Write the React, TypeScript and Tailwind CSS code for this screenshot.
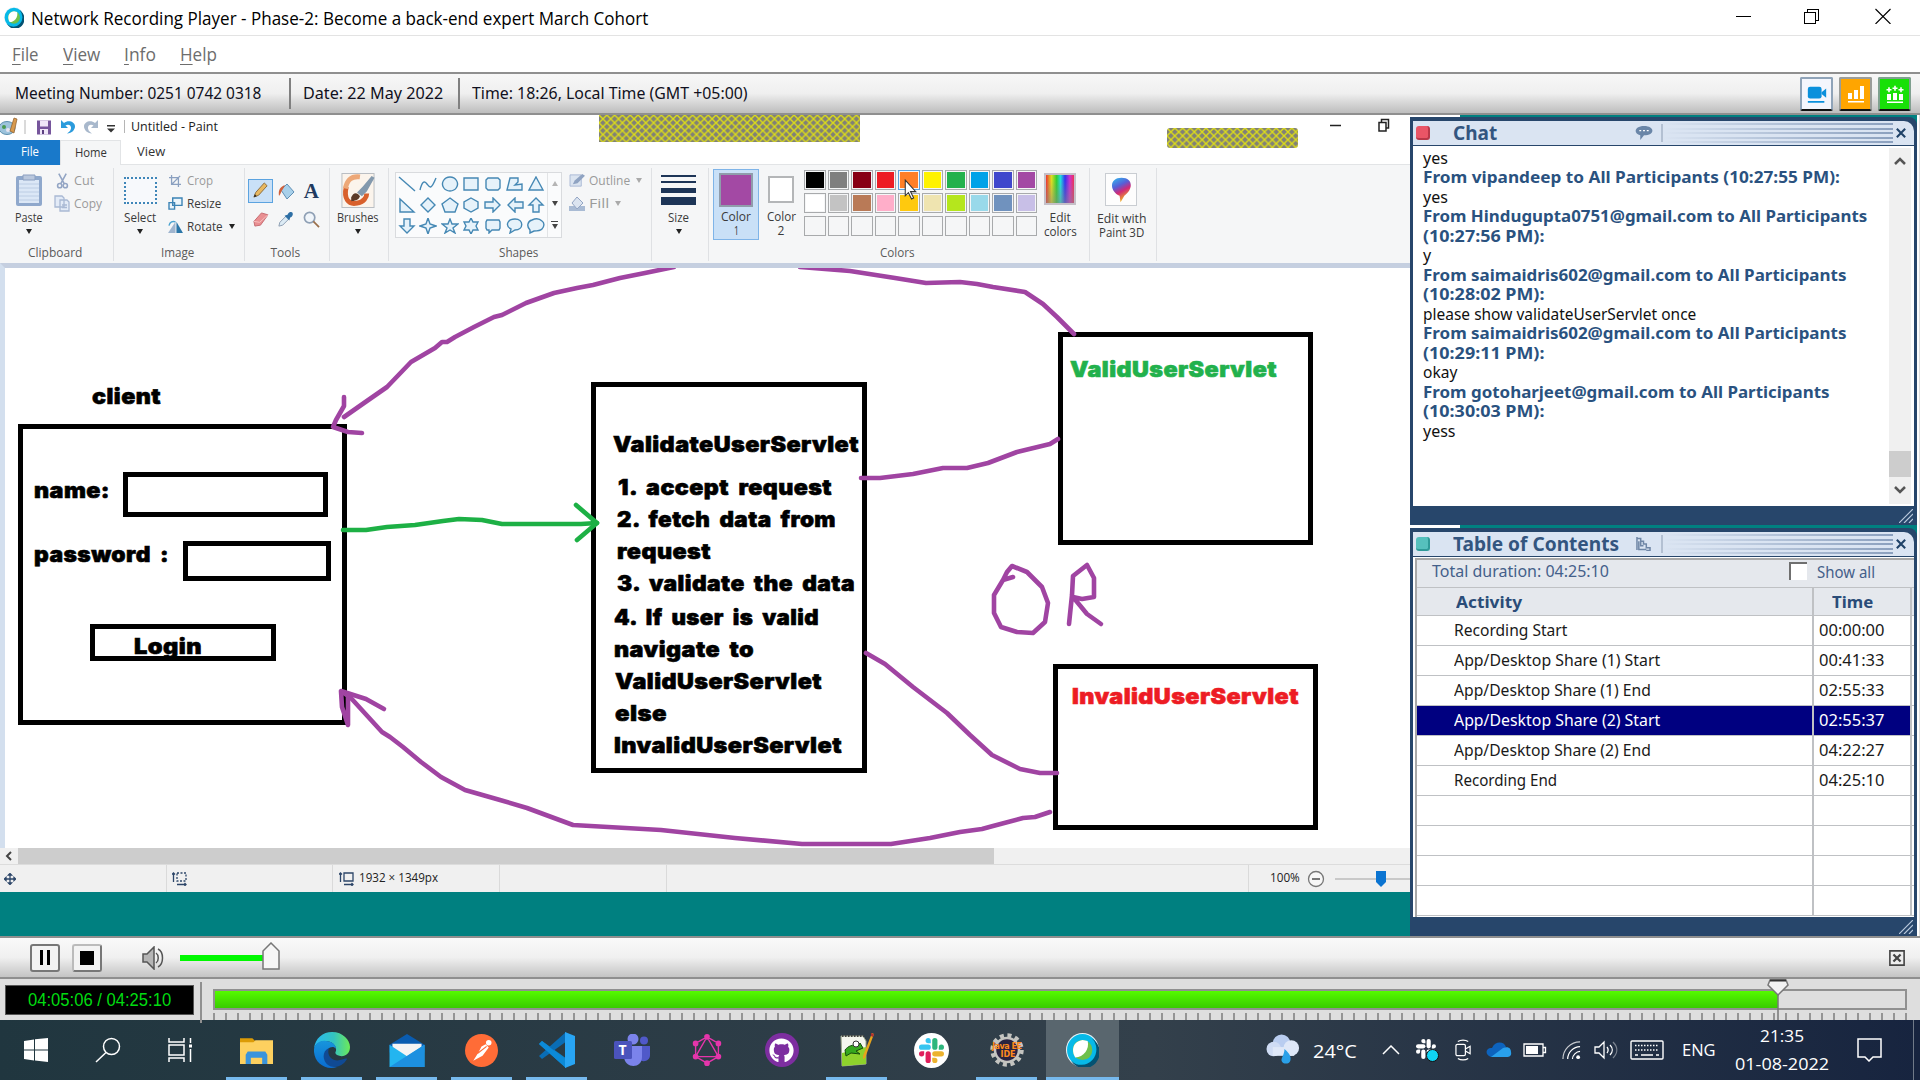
import React, { useLayoutEffect, useRef, useState } from "react";
import { FaGithub } from "react-icons/fa";
import { SiGraphql } from "react-icons/si";

/* One line of text, squeezed or stretched to a given width. */
function Fit({ w, className = "", children }: { w: number; className?: string; children: React.ReactNode }) {
  const ref = useRef<HTMLSpanElement>(null);
  const [scale, setScale] = useState(1);
  useLayoutEffect(() => {
    if (ref.current) setScale(w / ref.current.offsetWidth);
  }, [w]);
  return (
    <span className={"block shrink-0 whitespace-nowrap " + className} style={{ width: w }}>
      <span ref={ref} className="inline-block origin-left" style={{ transform: `scaleX(${scale})` }}>
        {children}
      </span>
    </span>
  );
}

const segoe = "font-['Open_Sans','Noto_Sans',sans-serif]";
const tahoma = "font-['Noto_Sans','DejaVu_Sans',sans-serif]";

function WebexLogo({ className }: { className: string }) {
  return (
    <svg viewBox="0 0 32 32" className={className} preserveAspectRatio="none">
      <circle cx="16" cy="16" r="16" fill="#e8f4f8" />
      <circle cx="16" cy="16" r="15" fill="#07b9e8" />
      <path d="M25 5 A15 15 0 1 1 5 26 A13 13 0 0 0 25 5Z" fill="#045272" />
      <circle cx="16" cy="16" r="9.5" fill="#6dc04b" />
      <path d="M21 7.5 C23 15 17 23 9 23 C5 17 6 8 16 6.5Z" fill="#fff" />
    </svg>
  );
}

function TitleBar() {
  return (
    <div className="flex h-[36px] items-center border-b border-[#e3e3e3] bg-white pl-1">
      <WebexLogo className="h-[21px] w-5" />
      <Fit w={617} className={"ml-[7px] text-[18px] leading-[34px] text-black " + segoe}>
        Network Recording Player - Phase-2: Become a back-end expert March Cohort
      </Fit>
      <svg className="-mt-[3px] mr-[29px] ml-auto h-[16px] w-[156px]" viewBox="0 0 156 16" fill="none" stroke="#000" strokeWidth="1.1" shapeRendering="crispEdges">
        <path d="M0.5 8.5H16M69.5 4.5h11v11h-11zM72.5 4V1.500h11v11h-3" />
        <path d="M140.500 1l15 15M155.500 1l-15 15" shapeRendering="auto" />
      </svg>
    </div>
  );
}

function MenuBar() {
  const items: [string, string, number, string][] = [
    ["F", "ile", 27, "ml-[12px]"],
    ["V", "iew", 37, "ml-[24px]"],
    ["I", "nfo", 32, "ml-[24px]"],
    ["H", "elp", 37, "ml-[24px]"],
  ];
  return (
    <div className={"flex h-[36px] items-center text-[18px] text-[#6d6d6d] " + segoe}>
      {items.map(([a, b, w, m]) => (
        <Fit key={b} w={w} className={m}>
          <span className="underline decoration-1 underline-offset-[3px]">{a}</span>
          {b}
        </Fit>
      ))}
    </div>
  );
}

function InfoBar() {
  return (
    <div className={"flex h-[43px] items-center border-y-2 border-[#8f8f8f] bg-linear-to-b from-[#f7f7f7] via-[#efefef] via-50% to-[#bdbdbd] text-[16.500px] text-[#101020] " + tahoma}>
      <Fit w={246} className="ml-[15px]">Meeting Number: 0251 0742 0318</Fit>
      <i className="ml-[28px] h-[31px] w-[2px] bg-[#808080]" />
      <Fit w={140} className="ml-[12px]">Date: 22 May 2022</Fit>
      <i className="ml-[15px] h-[31px] w-[2px] bg-[#808080]" />
      <Fit w={276} className="ml-[12px]">Time: 18:26, Local Time (GMT +05:00)</Fit>
      <div className="mr-[9px] ml-auto flex gap-[6px]">
        <div className="grid h-[34px] w-[33px] place-items-center rounded-[2px] border-2 border-[#8fa3b8] border-b-[#111] bg-[#f4f6fd]">
          <svg viewBox="0 0 24 20" className="h-[20px] w-[22px]" fill="#0a90dc">
            <rect x="2" y="2" width="15" height="13" rx="2.500" />
            <path d="M17 8l5-4v10l-5-4zM2 17.500h18v2H2z" />
          </svg>
        </div>
        <div className="grid h-[34px] w-[33px] place-items-center rounded-[2px] border-2 border-[#9a9d9a] border-b-[#111] bg-[#ffa500]">
          <svg viewBox="0 0 20 20" className="h-[20px] w-[20px]" fill="#fff">
            <path d="M2 9h4v6H2zM8 6h4v9H8zM14 2h4v13h-4zM2 17h16v1.500H2z" />
          </svg>
        </div>
        <div className="grid h-[34px] w-[33px] place-items-center rounded-[2px] border-2 border-[#7fa08f] border-b-[#111] bg-[#18e008]">
          <svg viewBox="0 0 20 20" className="h-[20px] w-[20px]" fill="#fff">
            <path d="M2 10h4v6H2zM8 9h4v7H8zM14 10h4v6h-4zM2 17.500h16V19H2zM1.500 5h5v1.600h-5zM3.200 3.300h1.600v5H3.200zM7.500 3.500h5v1.600h-5zM9.200 1.800h1.600v5H9.200zM13.500 5h5v1.600h-5zM15.200 3.300h1.600v5h-1.600z" />
          </svg>
        </div>
      </div>
    </div>
  );
}

/* ---------- Paint ---------- */

function Hatch({ id, className }: { id: string; className: string }) {
  return (
    <svg className={className}>
      <defs>
        <pattern id={id} width="7.800" height="7.800" patternUnits="userSpaceOnUse">
          <rect width="7.800" height="7.800" fill="#808078" />
          <path d="M0 0L7.800 7.800M7.800 0L0 7.800" stroke="#dcdc18" strokeWidth="1.400" />
        </pattern>
      </defs>
      <rect width="100%" height="100%" fill={`url(#${id})`} />
    </svg>
  );
}

function PaintTitle() {
  return (
    <div className={"flex h-[25px] shrink-0 bg-white text-[12.500px] text-[#222] " + segoe}>
      <svg className="mt-[2px] h-[20px] w-[120px]" viewBox="0 0 120 20">
        <ellipse cx="7" cy="11" rx="8" ry="6.500" fill="#9dc3dc" stroke="#5b8fae" />
        <circle cx="4" cy="10" r="2" fill="#4a9a50" />
        <circle cx="8" cy="13" r="2" fill="#e5e5f0" />
        <path d="M10 14L14 1l3 1-3 14z" fill="#d89a4e" stroke="#8a5a2a" strokeWidth=".7" />
        <path d="M25 3v14" stroke="#b5b5b5" />
        <path d="M37 3.500h14v14H37z" fill="#76559c" />
        <path d="M40 3.500h8v6h-8zM40 12h8v5.500h-8z" fill="#efe6f8" />
        <path d="M42 13h2v4h-2z" fill="#5b3f80" />
        <path d="M61 3v8h7l-2.500-2.500c3-2 6 0 5.500 3-.5 3-3 4-4 5 5 0 8-4 8-7 0-5-7-7-11-3.500z" fill="#2b9bdc" />
        <path d="M98 3v8h-7l2.500-2.500c-3-2-6 0-5.500 3 .5 3 3 4 4 5-5 0-8-4-8-7 0-5 7-7 11-3.500z" fill="#a8b8cc" />
        <path d="M107 8h8v1.500h-8zM107 11.500h8l-4 4z" fill="#333" />
      </svg>
      <i className="mt-[5px] ml-[4px] h-[13px] w-px bg-[#b5b5b5]" />
      <Fit w={87} className="ml-[6px] leading-[24px]">Untitled - Paint</Fit>
      <Hatch id="hatchWide" className="z-10 ml-[381px] h-[27px] w-[261px] shrink-0" />
      <Hatch id="hatchSmall" className="z-10 mt-[13px] ml-[307px] h-[20px] w-[131px] shrink-0 rounded-[3px]" />
      <svg className="mt-[2px] ml-[31px] h-[16px] w-[64px]" viewBox="0 0 64 16" fill="none" stroke="#222" strokeWidth="1.500">
        <path d="M1 8.500h11M50 5.500h7v8.500h-7zM52.500 5V2.500h7V11h-2.500" />
      </svg>
    </div>
  );
}

function PaintTabs() {
  return (
    <div className={"flex h-[25px] shrink-0 border-b border-[#e2e4e6] bg-white text-[12px] leading-[24px] text-[#333] " + segoe}>
      <div className="flex h-[25px] w-[60px] justify-center bg-[#1979ca] text-white">
        <Fit w={18}>File</Fit>
      </div>
      <div className="flex h-[25px] w-[61px] justify-center border-x border-t border-[#e2e4e6] bg-[#f5f6f7]">
        <Fit w={32}>Home</Fit>
      </div>
      <Fit w={28} className="ml-[16px]">View</Fit>
    </div>
  );
}

function Caret({ className = "border-t-[#222]" }: { className?: string }) {
  return <i className={"block h-0 w-0 border-x-[3px] border-t-[5px] border-x-transparent " + className} />;
}

function Big({ icon, label, w, className = "" }: { icon: React.ReactNode; label: string; w: number; className?: string }) {
  return (
    <div className={"flex flex-col items-center pt-[4px] " + className}>
      <div className="flex h-[38px] items-center">{icon}</div>
      <Fit w={w} className="leading-[18px]">{label}</Fit>
      <Caret className="mt-[2px] border-t-[#222]" />
    </div>
  );
}

function Row({ icon, label, w, caret = false, dim = false }: { icon: React.ReactNode; label: string; w: number; caret?: boolean; dim?: boolean }) {
  return (
    <div className={"flex h-[23px] items-center " + (dim ? "text-[#9a9a9a]" : "")}>
      <span className="mr-[3px] flex w-[18px] justify-center">{icon}</span>
      <Fit w={w}>{label}</Fit>
      {caret && <Caret className={"ml-[6px] " + (dim ? "border-t-[#aaaaaa]" : "border-t-[#222]")} />}
    </div>
  );
}

function Group({ label, lw, className, children }: { label: string; lw: number; className: string; children: React.ReactNode }) {
  return (
    <div className={"flex shrink-0 flex-col border-r border-[#dfe1e4] " + className}>
      <div className="flex h-[76px] shrink-0">{children}</div>
      <div className="flex justify-center pr-[3px] text-[#5a5a5a]">
        <Fit w={lw} className="leading-[18px]">{label}</Fit>
      </div>
    </div>
  );
}

const shapePaths = [
  "M1 1L17 15",
  "M1 14C3 6 5 4 8 8S12 14 17 2",
  "M9 1a7.500 7 0 1 0 .01 0z",
  "M2 2h14v12H2z",
  "M4 2h10l2 2v8l-2 2H4l-2-2V4z",
  "M4 2h8v4l-3 3 7-1v6H1z",
  "M9 1l7 13H2z",
  "M2 2l14 13H2z",
  "M9 1l7 7-7 7-7-7z",
  "M9 1l8 6-3 8H4L1 7z",
  "M9 1l7 4v6l-7 4-7-4V5z",
  "M1 5h8V1l7 7-7 7v-4H1z",
  "M17 5H9V1L2 8l7 7v-4h8z",
  "M6 15V8H2l7-7 7 7h-4v7z",
  "M6 1v7H2l7 7 7-7h-4V1z",
  "M9 0l2 6 6 2-6 2-2 6-2-6-6-2 6-2z",
  "M9 1l2 5h6l-5 4 2 5-5-3-5 3 2-5-5-4h6z",
  "M9 0l2 4h5l-2 4 2 4h-5l-2 4-2-4H2l2-4-2-4h5z",
  "M3 2h12l1 2v6l-1 2H8l-3 3v-3H3l-1-2V4z",
  "M9 1c9 0 9 11 0 11l-5 3 1-4C-1 8 1 1 9 1z",
  "M5 2c4-2 8-1 10 1 3 2 2 6 0 8-2 2-6 2-8 2l-4 2v-3C-1 8 1 3 5 2z",
];

const palette = [
  ["bg-[#000000]", "bg-[#7f7f7f]", "bg-[#880015]", "bg-[#ed1c24]", "bg-[#ff7f27]", "bg-[#fff200]", "bg-[#22b14c]", "bg-[#00a2e8]", "bg-[#3f48cc]", "bg-[#a349a4]"],
  ["bg-[#ffffff]", "bg-[#c3c3c3]", "bg-[#b97a57]", "bg-[#ffaec9]", "bg-[#ffc90e]", "bg-[#efe4b0]", "bg-[#b5e61d]", "bg-[#99d9ea]", "bg-[#7092be]", "bg-[#c8bfe7]"],
  Array(10).fill("bg-[#f5f6f7]") as string[],
];

function Ribbon() {
  return (
    <div className={"relative flex h-[98px] shrink-0 bg-[#f5f6f7] pt-[3px] pb-[2px] text-[12px] text-[#3a3a3a] " + segoe}>
      <Group label="Clipboard" lw={54} className="w-[114px]">
        <Big
          className="-mt-[1px] w-[57px]"
          label="Paste"
          w={28}
          icon={
            <svg viewBox="0 0 28 34" className="h-[34px] w-[28px]">
              <rect x="1" y="3" width="26" height="30" rx="2" fill="#8fa8cc" />
              <path d="M4 7h20v23H4z" fill="#dbe7f6" />
              <path d="M4 11h20M4 15h20M4 19h20M4 23h20M4 27h20" stroke="#bccde4" />
              <path d="M8 2h12v5H8z" fill="#b9c7dd" stroke="#8b9fc0" />
            </svg>
          }
        />
        <div className="-ml-[4px] flex flex-col pt-[1px]">
          <Row dim label="Cut" w={20} icon={
            <svg viewBox="0 0 14 18" className="h-[18px] w-[13px]" fill="none" stroke="#93a5c4" strokeWidth="1.700"><path d="M3 1l6 11M11 1L5 12" /><circle cx="4" cy="14" r="2.300" /><circle cx="10" cy="14" r="2.300" /></svg>
          } />
          <Row dim label="Copy" w={28} icon={
            <svg viewBox="0 0 16 17" className="h-[17px] w-[16px]" fill="#e3ebf7" stroke="#a9b9d4" strokeWidth="1.300"><path d="M1 1h7l2 2v9H1zM6 5h7l2 2v9H6z" /><path d="M8 10h5M8 12.500h5" /></svg>
          } />
        </div>
      </Group>
      <Group label="Image" lw={33} className="w-[131px]">
        <Big className="-mt-[1px] ml-[4px] w-[44px]" label="Select" w={32} icon={<div className="h-[27px] w-[33px] border-2 border-dotted border-[#3f86b8] bg-[#f7f9fc]" />} />
        <div className="ml-[4px] flex flex-col pt-[1px]">
          <Row dim label="Crop" w={26} icon={
            <svg viewBox="0 0 14 14" className="h-[12px] w-[12px]" fill="none" stroke="#8aa0c0" strokeWidth="1.500"><path d="M3 0v11h11M0 3h11v11M3 11L13 1" /></svg>
          } />
          <Row label="Resize" w={34} icon={
            <svg viewBox="0 0 16 14" className="h-[13px] w-[15px]" fill="#eaf4fb" stroke="#3b83b5" strokeWidth="1.500"><path d="M5 1h10v8H5zM1 6h6v7H1z" /></svg>
          } />
          <Row label="Rotate" w={36} caret icon={
            <svg viewBox="0 0 18 15" className="h-[14px] w-[17px]"><path d="M9 2l0 12H1z" fill="#9fb5cf" /><path d="M10 2l7 12h-7z" fill="#2b76a8" /><path d="M2 6C3 2 6 1 9 2" fill="none" stroke="#4ba3d0" strokeWidth="1.500" /></svg>
          } />
        </div>
      </Group>
      <Group label="Tools" lw={30} className="w-[85px]">
        <div className="mt-[10px] ml-[3px] grid h-[54px] w-[76px] grid-cols-3 grid-rows-2 place-items-center gap-y-[4px]">
          <div className="grid h-[24px] w-[25px] place-items-center border border-[#5ba3e0] bg-[#c9e0f7]">
            <svg viewBox="0 0 18 18" className="size-[17px]"><path d="M2 16l2-5L13 1l3 3L7 14z" fill="#e8b860" stroke="#8a6a3c" /><path d="M2 16l1-3 2 2z" fill="#222" /></svg>
          </div>
          <svg viewBox="0 0 18 18" className="size-[18px]"><path d="M4 8l6-6 7 8-7 7z" fill="#a8d0ea" stroke="#5f8fb5" /><path d="M8 3C3 5 1 8 2 14c2-2 2-5 4-7z" fill="#d0603c" /></svg>
          <b className="font-['Liberation_Serif',serif] text-[21px] leading-[20px] text-[#1f3a60]">A</b>
          <svg viewBox="0 0 18 16" className="h-[15px] w-[17px]"><path d="M2 10l8-9 7 2-8 11-6 1z" fill="#e98f92" stroke="#c46a70" /><path d="M2 10l6 1 9-8" fill="none" stroke="#f6c0c0" /></svg>
          <svg viewBox="0 0 18 18" className="size-[17px]"><path d="M2 16l1-4 7-7 3 3-7 7z" fill="#dcebf5" stroke="#8a9bb0" /><path d="M8 5l5 5 1-3c4-2 3-6 1-6-3 0-3 2-4 3z" fill="#2e6fa5" /></svg>
          <svg viewBox="0 0 18 18" className="size-[17px]" fill="#f0f5fa" stroke="#8fa0b5" strokeWidth="1.800"><circle cx="7" cy="7" r="5.500" /><path d="M11 11l6 6" stroke="#9a6f4a" /></svg>
        </div>
      </Group>
      <div className="flex w-[59px] shrink-0 justify-center border-r border-[#dfe1e4] pr-[2px]">
        <Big className="-mt-[1px]" label="Brushes" w={42} icon={
          <svg viewBox="0 0 34 36" className="h-[35px] w-[34px]">
            <rect x=".5" y=".5" width="33" height="35" fill="#fbf4ec" stroke="#b9bdc2" />
            <path d="M5 14C2 26 7 33 16 31c7-1 10-6 10-10" fill="none" stroke="#d8602c" strokeWidth="5" />
            <path d="M4 16C6 6 11 3 19 4" fill="none" stroke="#eda878" strokeWidth="5" />
            <path d="M16 20l6-6 9-11 3 2-8 14-5 5z" fill="#8399ad" />
            <path d="M10 25c2-5 6-6 9-1-1 4-6 5-9 5z" fill="#5b3a28" />
          </svg>
        } />
      </div>
      <Group label="Shapes" lw={39} className="w-[263px]">
        <div className="mt-[4px] ml-[6px] flex h-[66px] w-[167px] border border-[#d9dbde] bg-[#fafbfc]">
          <div className="grid w-[151px] grid-cols-7 grid-rows-3 place-items-center">
            {shapePaths.map((d, i) => (
              <svg key={i} viewBox="0 0 18 16" className="h-[16px] w-[18px]" fill={i < 2 ? "none" : "#e6f2fa"} stroke="#4588b4" strokeWidth="1.400"><path d={d} /></svg>
            ))}
          </div>
          <div className="flex w-[14px] flex-col items-center justify-around border-l border-[#e2e4e6]">
            <Caret className="rotate-180 border-t-[#b5b5b5]" />
            <Caret className="border-t-[#444]" />
            <div className="flex flex-col items-center gap-[2px]"><i className="h-px w-[7px] bg-[#444]" /><Caret className="border-t-[#444]" /></div>
          </div>
        </div>
        <div className="ml-[6px] flex flex-col pt-[1px]">
          <Row dim caret label="Outline" w={41} icon={
            <svg viewBox="0 0 18 16" className="h-[15px] w-[17px]"><path d="M1 2h12v12H1z" fill="#dbe4f0" stroke="#a9b9d4" /><path d="M4 12l2-4 8-7 3 2-8 8z" fill="#8fa3c2" /></svg>
          } />
          <Row dim caret label="Fill" w={20} icon={
            <svg viewBox="0 0 18 16" className="h-[16px] w-[18px]"><path d="M1 10h16v5H1z" fill="#a9bbd4" /><path d="M4 7l5-6 6 6-6 6z" fill="#dbe4f0" stroke="#93a5c4" /></svg>
          } />
        </div>
      </Group>
      <div className="flex w-[57px] shrink-0 justify-center border-r border-[#dfe1e4] pr-[3px]">
        <Big className="-mt-[1px]" label="Size" w={21} icon={
          <div className="flex h-[30px] w-[35px] flex-col justify-between *:bg-[#1d3557]"><i className="h-[1.500px]" /><i className="h-[2.500px]" /><i className="h-[5px]" /><i className="h-[8px]" /></div>
        } />
      </div>
      <Group label="Colors" lw={35} className="w-[381px]">
        <div className="mt-[1px] ml-[4px] flex h-[71px] w-[46px] flex-col items-center border border-[#7fb4e8] bg-[#c9e0f7] leading-[14px]">
          <div className="mt-[3px] mb-[3px] h-[34px] w-[34px] shrink-0 border-[2px] border-[#8f9cab] bg-[#a349a4]" />
          <Fit w={30}>Color</Fit>
          <Fit w={5}>1</Fit>
        </div>
        <div className="mt-[8px] ml-[6px] flex w-[32px] flex-col items-center leading-[14px]">
          <div className="mb-[7px] h-[27px] w-[26px] shrink-0 border-2 border-[#b4b6b8] bg-white" />
          <Fit w={29}>Color</Fit>
          <Fit w={7}>2</Fit>
        </div>
        <div className="mt-[2px] ml-[7px] flex flex-col gap-y-[3px]">
          {palette.map((row, r) => (
            <div key={r} className="flex gap-x-[2px]">
              {row.map((c, i) => (
                <div key={i} className={"h-[20px] w-[21.500px] border p-px " + (r === 0 && i === 4 ? "border-[#5ba3e0]" : "border-[#a8aaac]")}>
                  <div className={"h-full w-full " + c} />
                </div>
              ))}
            </div>
          ))}
        </div>
        <div className="mt-[5px] ml-[6px] flex w-[34px] flex-col items-center leading-[14px]">
          <div className="mb-[6px] h-[32px] w-[32px] shrink-0 border-2 border-[#c5c0c8] bg-[linear-gradient(to_bottom,transparent_20%,#8888_100%),linear-gradient(to_right,#e33,#dd2_20%,#3c3_38%,#2dd_52%,#33e_68%,#c3c_85%,#e35)]" />
          <Fit w={21}>Edit</Fit>
          <Fit w={33}>colors</Fit>
        </div>
      </Group>
      <div className="flex w-[67px] shrink-0 flex-col items-center border-r border-[#dfe1e4] pt-[5px] pr-[4px] leading-[14px]">
        <div className="mb-[6px] grid h-[33px] w-[32px] shrink-0 place-items-center border border-[#c9cdd2] bg-[#fdfdfd]">
          <svg viewBox="0 0 20 26" className="h-[26px] w-[19px]">
            <defs>
              <linearGradient id="balloon" x1="0" y1="0" x2=".4" y2="1">
                <stop offset="0" stopColor="#2fc0f0" />
                <stop offset=".4" stopColor="#5560d8" />
                <stop offset=".65" stopColor="#d02878" />
                <stop offset="1" stopColor="#f0b020" />
              </linearGradient>
            </defs>
            <path d="M10 0c13 0 12 13 3 19l-4 7-1-7C-3 14-3 0 10 0z" fill="url(#balloon)" />
          </svg>
        </div>
        <Fit w={49}>Edit with</Fit>
        <Fit w={45}>Paint 3D</Fit>
      </div>
      <svg viewBox="0 0 12 20" className="absolute top-[14px] left-[904px] h-[21px] w-[13px]">
        <path d="M1 1v15l3-3 3 6 2-1-3-6h5z" fill="#fff" stroke="#333" />
      </svg>
    </div>
  );
}

type Box = [number, number, number, number];
const boxes: Box[] = [
  [18, 424, 347, 725],
  [123, 472, 328, 517],
  [183, 541, 331, 581],
  [90, 624, 276, 661],
  [591, 382, 867, 773],
  [1058, 332, 1313, 545],
  [1053, 664, 1318, 830],
];
const labels: [string, number, number, number, string][] = [
  ["client", 92, 161, 404, "#000"],
  ["name:", 34, 110, 498, "#000"],
  ["password :", 34, 169, 562, "#000"],
  ["Login", 134, 202, 654, "#000"],
  ["ValidateUserServlet", 613, 859, 452, "#000"],
  ["1. accept request", 618, 832, 495, "#000"],
  ["2. fetch data from", 617, 836, 527, "#000"],
  ["request", 617, 711, 559, "#000"],
  ["3. validate the data", 617, 855, 591, "#000"],
  ["4. If user is valid", 614, 819, 625, "#000"],
  ["navigate to", 614, 754, 657, "#000"],
  ["ValidUserServlet", 615, 822, 689, "#000"],
  ["else", 615, 667, 721, "#000"],
  ["InvalidUserServlet", 614, 842, 753, "#000"],
  ["ValidUserServlet", 1070, 1277, 377, "#22b14c"],
  ["InvalidUserServlet", 1072, 1299, 704, "#ed1c24"],
];
const strokes = [
  "344,417 364,403 387,387 411,362 435,348 442,342 447,342 455,337 474,327 494,317 502,315 526,303 554,293 577,288 593,285 620,278 645,273 674,267",
  "800,267 850,271 895,278 926,283 960,282 977,284 993,287 1025,292 1043,304 1057,317 1074,334",
  "344,397 344,406 336,420 333,427 348,432 362,433",
  "861,478 880,478 913,474 943,468 967,468 988,463 1017,452 1050,444 1058,439",
  "866,653 885,664 913,687 947,713 970,735 992,755 1020,769 1040,773 1057,773",
  "384,709 366,699 341,691 342,707 348,725 348,696",
  "344,693 350,697 382,732 390,737 403,747 421,762 441,777 465,790 500,800 527,808 573,825 661,830 735,838 802,844 891,844 930,838 960,832 982,829 993,826 1023,818 1035,817 1050,812",
  "1013,577 1003,580 994,595 994,613 1001,627 1017,632 1033,633 1045,622 1048,603 1042,587 1027,572 1012,566 1007,572 1003,580",
  "1069,624 1072,595 1073,576 1087,565 1094,578 1094,597 1082,599 1073,597 1087,614 1101,624",
];
const greenStrokes = ["343,530 366,530 387,527 415,525 443,521 459,519 482,520 502,524 581,524 597,523", "576,505 597,523 577,540"];

function Canvas() {
  return (
    <div className="h-[585px] shrink-0 border-t-[5px] border-l-[5px] border-t-[#c5cfe0] border-l-[#d3dfee] bg-white">
      <svg className="block h-[580px] w-[1405px]" viewBox="5 268 1405 580">
        {labels.map(([t, x1, x2, y, c], i) => (
          <text key={i} x={x1} y={y} textLength={x2 - x1} lengthAdjust="spacingAndGlyphs" fill={c} stroke={c} strokeWidth=".6" className="font-['Inter',sans-serif] text-[21.500px] font-black tracking-[0.4px] [word-spacing:4px]">
            {t}
          </text>
        ))}
        {boxes.map(([x1, y1, x2, y2], i) => (
          <rect key={i} x={x1 + 2.5} y={y1 + 2.5} width={x2 - x1 - 5} height={y2 - y1 - 5} fill="none" stroke="#000" strokeWidth="5" />
        ))}
        <g fill="none" strokeWidth="4.600" strokeLinecap="round" strokeLinejoin="round">
          {strokes.map((p, i) => <polyline key={i} points={p} stroke="#a044a2" />)}
          {greenStrokes.map((p, i) => <polyline key={i} points={p} stroke="#1db045" />)}
        </g>
      </svg>
    </div>
  );
}

function PaintFooter() {
  return (
    <>
      <div className="flex h-[17px] shrink-0 items-center border-b border-[#dcdcdc] bg-[#f0f0f0]">
        <svg viewBox="0 0 18 16" className="h-[16px] w-[18px]" fill="none" stroke="#444" strokeWidth="2"><path d="M11 4L7 8l4 4" /></svg>
        <div className="h-[16px] w-[976px] bg-[#cdcdcd]" />
      </div>
      <div className={"flex h-[27px] shrink-0 items-center bg-[#f0f0f0] text-[12.500px] text-[#222] " + segoe}>
        <div className="flex h-full w-[167px] items-center border-r border-[#dadada] pl-[4px]">
          <svg viewBox="0 0 12 12" className="size-[12px]" stroke="#2c4568" strokeWidth="1.300" fill="#2c4568"><path d="M6 0v12M0 6h12M4.500 2L6 .5 7.500 2zM4.500 10L6 11.500 7.500 10zM2 4.500L.5 6 2 7.500zM10 4.500L11.500 6 10 7.500z" /></svg>
        </div>
        <div className="flex h-full w-[166px] items-center border-r border-[#dadada] pl-[5px]">
          <svg viewBox="0 0 15 14" className="h-[14px] w-[15px]" fill="none" stroke="#2c4568" strokeWidth="1.300"><path d="M5 1h9v8H5z" strokeDasharray="2 1.500" /><path d="M1.500 10V1M0 2.500L1.500 1 3 2.500M5 12.500h9M12.500 11L14 12.500 12.500 14" /></svg>
        </div>
        <div className="flex h-full w-[167px] items-center border-r border-[#dadada] pl-[6px]">
          <svg viewBox="0 0 15 14" className="h-[14px] w-[15px]" fill="none" stroke="#2c4568" strokeWidth="1.300"><path d="M5 1h9v8H5zM1.500 10V1M0 2.500L1.500 1 3 2.500M5 12.500h9M12.500 11L14 12.500 12.500 14" /></svg>
          <Fit w={79} className="ml-[5px]">1932 × 1349px</Fit>
        </div>
        <div className="h-full w-[167px] border-r border-[#dadada]" />
        <div className="h-full w-[582px] border-r border-[#dadada]" />
        <Fit w={30} className="ml-[21px]">100%</Fit>
        <svg viewBox="0 0 18 18" className="ml-[7px] size-[18px] shrink-0" fill="#f7f7f7" stroke="#777" strokeWidth="1.300"><circle cx="9" cy="9" r="7.500" /><path d="M5 9h8" strokeWidth="2" /></svg>
        <div className="ml-[10px] flex flex-1 items-center">
          <div className="h-[2px] w-[41px] bg-[#c9c9c9]" />
          <svg viewBox="0 0 10 16" className="h-[16px] w-[10px]" fill="#0b74d1"><path d="M0 0h10v11l-5 5-5-5z" /></svg>
          <div className="h-[2px] flex-1 bg-[#c9c9c9]" />
        </div>
      </div>
    </>
  );
}

/* ---------- Side panels ---------- */

function PanelTitle({ title, w, color, iconGap, icon }: { title: string; w: number; color: string; iconGap: string; icon: React.ReactNode }) {
  return (
    <div className="mx-[3px] mt-[4px] flex h-[24px] shrink-0 items-center rounded-tr-[10px] bg-[#dae4f2]">
      <i className={"ml-[3px] h-[14px] w-[14px] rounded-[3px] border-r-2 border-b-2 " + color} />
      <Fit w={w} className="ml-[23px] text-[19px] leading-[22px] font-bold text-[#33557f]">{title}</Fit>
      <div className={"flex w-[20px] shrink-0 justify-center " + iconGap}>{icon}</div>
      <i className="ml-auto h-[18px] w-[2px] bg-[#b3c0d2]" />
      <div className="flex h-[20px] w-[230px] flex-col justify-between *:h-[2px] *:bg-linear-to-r *:from-transparent *:to-[#8ba0be]">
        <i /><i /><i /><i /><i />
      </div>
      <svg viewBox="0 0 12 12" className="mr-[8px] ml-[3px] h-[10px] w-[10px]" stroke="#1f4268" strokeWidth="2.500"><path d="M1 1l10 10M11 1L1 11" /></svg>
    </div>
  );
}

function Grip() {
  return (
    <div className="flex h-[19px] shrink-0 items-center justify-end pr-[4px]">
      <svg viewBox="0 0 14 14" className="size-[14px]" stroke="#b8c8dc" strokeWidth="1.200"><path d="M0 14L14 0M5 14l9-9M10 14l4-4" /></svg>
    </div>
  );
}

const chat: [string, number, boolean][] = [
  ["yes", 25, false],
  ["From vipandeep to All Participants (10:27:55 PM):", 417, true],
  ["yes", 25, false],
  ["From Hindugupta0751@gmail.com to All Participants", 444, true],
  ["(10:27:56 PM):", 121, true],
  ["y", 8, false],
  ["From saimaidris602@gmail.com to All Participants", 423, true],
  ["(10:28:02 PM):", 121, true],
  ["please show validateUserServlet once", 273, false],
  ["From saimaidris602@gmail.com to All Participants", 423, true],
  ["(10:29:11 PM):", 121, true],
  ["okay", 34, false],
  ["From gotoharjeet@gmail.com to All Participants", 407, true],
  ["(10:30:03 PM):", 121, true],
  ["yess", 33, false],
];

function ChatPanel() {
  return (
    <div className={"flex h-[408px] shrink-0 flex-col rounded-tr-[8px] bg-[#27466b] " + tahoma}>
      <PanelTitle
        title="Chat"
        w={44}
        iconGap="ml-[137px]"
        color="border-[#b83848] bg-[#ea5566]"
        icon={<svg viewBox="0 0 18 15" className="h-[14px] w-[18px]" fill="#6a86a8"><path d="M9 0c12 0 12 10 0 10l-4 5 0-5C-3 8-1 0 9 0z" /><path d="M4 5h2M8 5h2M12 5h2" stroke="#fff" strokeWidth="1.500" /></svg>}
      />
      <div className="mx-[3px] mt-[1px] flex h-[360px] shrink-0 bg-white">
        <div className="flex-1 pt-[3px] pl-[10px] text-[16px] leading-[19.480px]">
          {chat.map(([t, w, b], i) => (
            <Fit key={i} w={w} className={b ? "font-bold text-[#2a527f]" : "text-[#111]"}>{t}</Fit>
          ))}
        </div>
        <div className="mt-[2px] mr-[3px] flex h-[356px] w-[22px] flex-col items-center bg-[#f0f0f0]">
          <svg viewBox="0 0 12 8" className="mt-[9px] h-[8px] w-[12px]" fill="none" stroke="#555" strokeWidth="2.500"><path d="M1 7l5-5 5 5" /></svg>
          <div className="mt-[286px] h-[26px] w-[22px] bg-[#cdcdcd]" />
          <svg viewBox="0 0 12 8" className="mt-[9px] h-[8px] w-[12px]" fill="none" stroke="#555" strokeWidth="2.500"><path d="M1 1l5 5 5-5" /></svg>
        </div>
      </div>
      <Grip />
    </div>
  );
}

const toc: [string, number, string][] = [
  ["Recording Start", 113, "00:00:00"],
  ["App/Desktop Share (1) Start", 206, "00:41:33"],
  ["App/Desktop Share (1) End", 197, "02:55:33"],
  ["App/Desktop Share (2) Start", 206, "02:55:37"],
  ["App/Desktop Share (2) End", 197, "04:22:27"],
  ["Recording End", 103, "04:25:10"],
  ["", 0, ""],
  ["", 0, ""],
  ["", 0, ""],
  ["", 0, ""],
];

function TocPanel() {
  return (
    <div className={"flex h-[408px] shrink-0 flex-col rounded-tr-[8px] bg-[#27466b] " + tahoma}>
      <PanelTitle
        title="Table of Contents"
        w={166}
        iconGap="ml-[14px]"
        color="border-[#2f9a98] bg-[#56c0bd]"
        icon={<svg viewBox="0 0 16 15" className="h-[14px] w-[15px]" fill="none" stroke="#6f86a6" strokeWidth="1.600"><path d="M1 0v14M1 1.500h4v3h3v3h3v4h4v3h-4M3 4.500v9h8M5 4.500v5h3" /></svg>}
      />
      <div className="mx-[3px] mt-[1px] flex h-[360px] shrink-0 flex-col overflow-hidden bg-white pt-[1px] pl-[2px]">
        <div className="flex h-full flex-col border-t-2 border-l-2 border-[#a8a8a8] text-[16px]">
          <div className="flex h-[27px] shrink-0 items-center bg-[#e5e8ed] text-[#44608a]">
            <Fit w={177} className="-mt-[6px] ml-[15px]">Total duration: 04:25:10</Fit>
            <i className="-mt-[5px] ml-[180px] h-[18px] w-[18px] border-t-2 border-l-2 border-[#6f6f6f] bg-white" />
            <Fit w={58} className="-mt-[3px] ml-[10px]">Show all</Fit>
          </div>
          <div className="flex h-[29px] shrink-0 items-center border-t border-b border-[#bfc1c4] bg-[#e5e8ed] text-[16px] font-bold text-[#2a4c78]">
            <div className="flex h-full w-[397px] items-center border-r-2 border-[#bfc1c4]"><Fit w={66} className="ml-[39px]">Activity</Fit></div>
            <div className="flex h-full w-[98px] items-center border-r-2 border-[#bfc1c4]"><Fit w={41} className="ml-[18px]">Time</Fit></div>
          </div>
          {toc.map(([t, w, time], i) => (
            <div key={i} className="flex h-[30px] shrink-0 items-center border-b border-[#bfc1c4]">
              <div className={"flex h-full w-[397px] items-center border-r-2 border-[#bfc1c4] pb-px " + (i === 3 ? "bg-[#000080] text-white" : "text-[#1a1a1a]")}>
                {t && <Fit w={w} className="ml-[37px]">{t}</Fit>}
              </div>
              <div className={"flex h-full w-[98px] items-center border-r-2 border-[#bfc1c4] pb-px " + (i === 3 ? "bg-[#000080] text-white" : "text-[#1a1a1a]")}>
                {time && <Fit w={66} className="ml-[5px]">{time}</Fit>}
              </div>
            </div>
          ))}
        </div>
      </div>
      <Grip />
    </div>
  );
}

/* ---------- Player controls ---------- */

function Controls() {
  return (
    <div className="flex h-[43px] shrink-0 items-center border-t-2 border-b-2 border-[#8f8f8f] bg-linear-to-b from-[#fafafa] via-[#f0f0f0] via-50% to-[#c4c4c4] pl-[30px]">
      <div className="flex h-[28px] w-[30px] items-center justify-center gap-[4px] rounded-[3px] border-2 border-[#777] bg-[#f3f3f3]">
        <i className="h-[15px] w-[3px] bg-black" /><i className="h-[15px] w-[3px] bg-black" />
      </div>
      <div className="ml-[12px] grid h-[28px] w-[30px] place-items-center rounded-[3px] border-2 border-[#777] border-t-[#bbb] border-l-[#bbb] bg-[#f3f3f3]">
        <i className="h-[14px] w-[14px] bg-black" />
      </div>
      <svg viewBox="0 0 22 24" className="ml-[40px] h-[24px] w-[22px]" fill="#b5b5b5" stroke="#555" strokeWidth="1.500"><path d="M1 8h4l7-7v22l-7-7H1z" /><path d="M14 7c3 2 3 8 0 10M16 3c6 3 6 15 0 18" fill="none" /></svg>
      <div className="ml-[16px] h-[6px] w-[83px] bg-[#00f800]" />
      <svg viewBox="0 0 18 28" className="-mt-[4px] -ml-px h-[28px] w-[18px]" fill="#f6f6f6" stroke="#777" strokeWidth="1.500"><path d="M1 27V9l8-8 8 8v18z" /></svg>
      <svg viewBox="0 0 18 18" className="mr-[15px] ml-auto size-[16px]" fill="#eee" stroke="#444" strokeWidth="1.800"><path d="M1 1h16v16H1z" /><path d="M5 5l8 8M13 5l-8 8" strokeWidth="2.500" /></svg>
    </div>
  );
}

function Timeline() {
  return (
    <div className="relative flex h-[41px] shrink-0 bg-[#dedede]">
      <div className="mt-[6px] ml-[5px] flex h-[30px] w-[189px] items-center justify-center border border-[#555] bg-black font-['Liberation_Sans',sans-serif] text-[18px] text-[#00dc10]">
        <Fit w={143}>04:05:06 / 04:25:10</Fit>
      </div>
      <i className="mt-[3px] ml-[6px] h-full w-[2px] bg-[#909090]" />
      <div className="mt-[10px] ml-[11px] flex flex-col">
        <div className="h-[21px] w-[1694px] border-2 border-[#909090]">
          <div className="h-full w-[1563px] bg-linear-to-b from-[#55fb00] to-[#38cc00]" />
        </div>
        <div className="mt-[3px] h-[7px] w-[1694px] bg-[repeating-linear-gradient(to_right,#959595_0_2px,transparent_2px_12px)]" />
      </div>
      <svg viewBox="0 0 22 41" className="absolute top-0 left-[1767px] h-[41px] w-[22px]" fill="#f2f2f2" stroke="#777" strokeWidth="1.500"><path d="M11 15v26" /><path d="M3 1h16l2 5-10 10L1 6z" /><path d="M3 1.500h16" stroke="#333" strokeWidth="2" /></svg>
    </div>
  );
}

/* ---------- Windows taskbar ---------- */

function SlackMark({ className, mono = false }: { className: string; mono?: boolean }) {
  const c = mono ? ["#fff", "#fff", "#fff", "#fff"] : ["#36c5f0", "#2eb67d", "#ecb22e", "#e01e5a"];
  return (
    <svg viewBox="0 0 24 24" className={className} preserveAspectRatio="none">
      {c.map((f, i) => (
        <g key={i} fill={f} transform={`rotate(${i * 90} 12 12)`}>
          <rect x="0" y="6.300" width="11.300" height="5" rx="2.500" />
          <path d="M6.300 2.500a2.500 2.500 0 0 1 5 0v2.500H8.800a2.500 2.500 0 0 1-2.500-2.500z" />
        </g>
      ))}
    </svg>
  );
}

const apps: { icon: React.ReactNode; open: boolean }[] = [
  {
    open: true,
    icon: (
      <svg viewBox="0 0 32 26" className="h-[27px] w-[33px]">
        <path d="M0 1h12l3 3-3 4H0z" fill="#dc9b06" />
        <path d="M0 5h13l2-2h17v23H0z" fill="#fdd05f" />
        <path d="M5.500 26V17l2-3h17l2 3v9h-5v-6h-11v6z" fill="#3a94dc" />
      </svg>
    ),
  },
  {
    open: true,
    icon: (
      <svg viewBox="0 0 36 36" className="h-[36px] w-[36px]">
        <defs>
          <linearGradient id="edgeA" x1="0" x2="1"><stop offset="0" stopColor="#28b8f0" /><stop offset=".55" stopColor="#34c3c0" /><stop offset="1" stopColor="#6cea58" /></linearGradient>
          <linearGradient id="edgeB" x1="0" y1="0" x2="0" y2="1"><stop offset="0" stopColor="#1795dc" /><stop offset="1" stopColor="#0a6cd0" /></linearGradient>
        </defs>
        <path d="M0 17C1 6 9 0 18 0c11 0 18 8 18 15 0 8-7 11-13 8-2-1-2-3-1-4C23 13 17 9 12 9 6 9 1 12 0 17z" fill="url(#edgeA)" />
        <path d="M0 17c1-6 7-9 12-8 6 0 10 4 10 8-2-3-6-2-8 0-5 6 1 17 9 18C11 39-1 30 0 17z" fill="url(#edgeB)" />
        <path d="M15 16c-3 8 4 14 11 12 4-1 7-2 7-1-4 8-14 10-19 6-6-5-6-14 1-17z" fill="#104a94" />
      </svg>
    ),
  },
  {
    open: true,
    icon: (
      <svg viewBox="0 0 36 34" className="h-[33px] w-[36px]">
        <path d="M0 11L18 0l18 11v8H0z" fill="#0a5cb0" />
        <path d="M3 10h30v9L18 26 3 19z" fill="#f4f4f4" />
        <path d="M0 11l18 12L36 11v23H0z" fill="#23b5f0" />
        <path d="M0 34L36 11v23z" fill="#1d90e0" />
      </svg>
    ),
  },
  {
    open: true,
    icon: (
      <svg viewBox="0 0 32 32" className="h-[33px] w-[33px]">
        <circle cx="16" cy="16" r="16" fill="#ff6c37" />
        <circle cx="23" cy="8.500" r="2.700" fill="#fff" />
        <path d="M20 10l3 3-6 8-9 5 5-8 3-6z" fill="#fff" />
        <path d="M12 19l9-7" stroke="#ff6c37" strokeWidth="1.200" />
      </svg>
    ),
  },
  {
    open: true,
    icon: (
      <svg viewBox="0 0 36 36" className="h-[36px] w-[36px]">
        <path d="M0 12l3-3 25 18-1 9z" fill="#0b86d2" />
        <path d="M0 24l3 3L28 9l-1-9z" fill="#0a6db5" />
        <path d="M0 12l3-3 24 19v8z" fill="#0c8ad8" />
        <path d="M26 0l10 4v28l-10 4z" fill="#28a5f4" />
      </svg>
    ),
  },
  {
    open: false,
    icon: (
      <svg viewBox="0 0 36 32" className="h-[32px] w-[36px]">
        <circle cx="19" cy="5" r="5.500" fill="#7b83eb" />
        <circle cx="30" cy="6.500" r="4" fill="#5059c9" />
        <path d="M24 12h12v9c0 7-9 8-12 3z" fill="#5059c9" />
        <path d="M10 12h18v11c0 12-17 12-18 0z" fill="#7b83eb" />
        <rect x="0" y="7" width="18" height="18" rx="1.500" fill="#4b53bc" />
        <text x="4.500" y="21" fill="#fff" className="font-['Open_Sans',sans-serif] text-[14px] font-bold">T</text>
      </svg>
    ),
  },
  { open: false, icon: <SiGraphql className="size-[32px] text-[#e535ab]" /> },
  {
    open: false,
    icon: <div className="grid size-[34px] place-items-center rounded-full bg-[#7d2ea0]"><FaGithub className="size-[25px] text-white" /></div>,
  },
  {
    open: true,
    icon: (
      <svg viewBox="0 0 34 34" className="size-[34px]">
        <path d="M1 3h22l3 5v23L2 33z" fill="#f4f6ee" stroke="#9aa58a" />
        <path d="M2 20l24-6v17L2 33z" fill="#8ed22c" />
        <path d="M2 3h22" stroke="#444" strokeWidth="2" strokeDasharray="1.500 1.500" />
        <path d="M5 17c3-4 8-6 13-4l2-3 3 5-7 3 4 3-9-1-5 3z" fill="#36a81e" stroke="#164d0c" />
        <circle cx="16" cy="11" r="3" fill="#fff" stroke="#333" />
        <path d="M32 0l2 1-9 24-2 1v-3z" fill="#e8a51c" />
        <path d="M31 0l3 1-1 3-2-1z" fill="#b03030" />
      </svg>
    ),
  },
  {
    open: false,
    icon: <div className="grid size-[35px] place-items-center rounded-full bg-white"><SlackMark className="size-[25px]" /></div>,
  },
  {
    open: true,
    icon: (
      <svg viewBox="0 0 34 34" className="size-[34px]">
        <circle cx="17" cy="17" r="14.500" fill="none" stroke="#c4c4c0" strokeWidth="4.500" strokeDasharray="4 3.590" />
        <circle cx="17" cy="17" r="12" fill="#2a2340" stroke="#c4c4c0" strokeWidth="2.500" />
        <g fill="#ff8a1c" className="font-['DejaVu_Sans',sans-serif] text-[8px] font-bold">
          <text x="2" y="15.500" textLength="30">Java EE</text>
          <text x="10.500" y="24">IDE</text>
        </g>
      </svg>
    ),
  },
];

function Taskbar() {
  return (
    <div className={"flex h-[60px] shrink-0 items-stretch bg-linear-to-r from-[#20363f] via-[#33404b] via-60% to-[#17243f] text-white " + segoe}>
      <div className="flex w-[219px] items-center">
        <svg viewBox="0 0 24 24" className="ml-[24px] size-[24px]" fill="#fff"><path d="M0 3l10-1.500v10H0zM11 1.300L24 0v11.500H11zM0 12.500h10v10L0 21zM11 12.500h13V24l-13-1.500z" /></svg>
        <svg viewBox="0 0 26 26" className="ml-[47px] size-[26px]" fill="none" stroke="#fff" strokeWidth="1.500"><circle cx="16.500" cy="9.500" r="8" /><path d="M11 15.500L1 25" /></svg>
        <svg viewBox="0 0 24 24" className="ml-[47px] size-[24px]" fill="none" stroke="#fff" strokeWidth="1.500"><path d="M1 0v4h15V0M1 24v-4h15v4M1 7h15v10H1zM22.500 0v5M22.500 11v13" /><path d="M21 6.500h3v3h-3z" fill="#fff" stroke="none" /></svg>
      </div>
      {apps.map((a, i) => (
        <div key={i} className="flex w-[75px] flex-col items-center">
          <div className="flex h-[57px] items-center pt-[3px]">{a.icon}</div>
          {a.open && <i className="h-[3px] w-[61px] bg-[#76b9ed]" />}
        </div>
      ))}
      <div className="ml-[2px] flex h-[60px] w-[73px] flex-col items-center border-b-[3px] border-[#76b9ed] bg-[#59666e] pt-[13px]">
        <WebexLogo className="h-[34px] w-[33px]" />
      </div>
      <div className="ml-auto flex items-center">
        <svg viewBox="0 0 36 32" className="h-[32px] w-[35px]">
          <circle cx="16" cy="9" r="9" fill="#b9cdf0" /><circle cx="8" cy="15" r="7.500" fill="#cfdcf4" /><circle cx="26" cy="14" r="8" fill="#dfe8f8" /><path d="M7 13h22v9H7z" fill="#dfe8f8" />
          <path d="M19 15c6 5 7 9 6 12-1 4-8 4-9 0-.5-3 3-6 3-12z" fill="#2aa0e8" />
        </svg>
        <Fit w={44} className="ml-[12px] pt-[3px] text-[19px]">24°C</Fit>
        <svg viewBox="0 0 18 10" className="ml-[25px] h-[10px] w-[18px]" fill="none" stroke="#fff" strokeWidth="1.500"><path d="M1 9l8-8 8 8" /></svg>
        <div className="relative ml-[16px] size-[22px]">
          <SlackMark mono className="size-[20px]" />
          <i className="absolute right-[-1px] bottom-[-1px] size-[13px] rounded-full border border-[#111] bg-[#0fd4f4]" />
        </div>
        <svg viewBox="0 0 18 22" className="ml-[17px] h-[22px] w-[17px]" fill="none" stroke="#fff" strokeWidth="1.300"><rect x="1" y="5" width="10" height="12" rx="1.500" /><path d="M11 10l5-3v8l-5-3M3 2c3-2 8-2 11 0M3 20c3 2 8 2 11 0" /></svg>
        <svg viewBox="0 0 26 16" className="ml-[14px] h-[16px] w-[26px]"><path d="M5 15C-2 13 0 5 6 6c3-7 12-7 14-1l-8 10z" fill="#0d63bd" /><path d="M5 15l12-9c6-2 8 1 8 4 1 4-2 5-4 5z" fill="#29a0ec" /></svg>
        <svg viewBox="0 0 24 14" className="ml-[11px] h-[14px] w-[24px]" fill="none" stroke="#fff" strokeWidth="1.300"><path d="M1 1h19v12H1zM20 4.500h2.500v5H20" /><path d="M3 3h12v8H3z" fill="#fff" stroke="none" /></svg>
        <svg viewBox="0 0 20 20" className="ml-[15px] h-[19px] w-[19px]" fill="none" stroke="#fff" strokeWidth="1.300"><path d="M1 19C1 9 9 1 19 1" opacity=".75" /><path d="M6 19C6 12 12 6 19 6M11 19c0-4 4-8 8-8" /><circle cx="17" cy="17" r="2" fill="#fff" stroke="none" /></svg>
        <svg viewBox="0 0 24 20" className="ml-[13px] h-[20px] w-[24px]" fill="none" stroke="#fff" strokeWidth="1.300"><path d="M1 7h4l5-5v16l-5-5H1zM13 7c1.500 2 1.500 4 0 6M16 5c3 3 3 7 0 10" /><path d="M19 2c5 5 5 11 0 16" opacity=".4" /></svg>
        <svg viewBox="0 0 34 20" className="ml-[12px] h-[20px] w-[34px]" fill="none" stroke="#fff" strokeWidth="1.400"><rect x="1" y="1" width="32" height="18" rx="1" /><path d="M5 5.500h24M5 10h24" strokeDasharray="1.500 1.500" /><path d="M5 15h3M11 15h12M26 15h3" /></svg>
        <Fit w={34} className="ml-[18px] text-[17px]">ENG</Fit>
        <div className="ml-[19px] flex w-[94px] flex-col items-center text-[16.500px] leading-[28px]">
          <Fit w={44}>21:35</Fit>
          <Fit w={94}>01-08-2022</Fit>
        </div>
        <svg viewBox="0 0 25 24" className="ml-[28px] h-[24px] w-[25px]" fill="none" stroke="#fff" strokeWidth="1.500"><path d="M1 1h23v18h-8l-4 4-4-4H1z" /></svg>
        <i className="mr-[6px] ml-[31px] h-[60px] w-px bg-[#707a88]" />
      </div>
    </div>
  );
}

export default function App() {
  return (
    <div className="flex h-[1080px] w-[1920px] flex-col overflow-hidden bg-white">
      <TitleBar />
      <MenuBar />
      <InfoBar />
      <div className="flex h-[821px] shrink-0">
        <div className="flex w-[1410px] flex-col overflow-hidden bg-[#008080]">
          <PaintTitle />
          <PaintTabs />
          <Ribbon />
          <Canvas />
          <PaintFooter />
        </div>
        <div className="flex w-[507px] flex-col gap-[3px] bg-[linear-gradient(to_right,#fff_50px,#008080_50px)] pt-[2px]">
          <ChatPanel />
          <TocPanel />
        </div>
        <div className="w-[3px] border-r border-[#ddd] bg-white" />
      </div>
      <Controls />
      <Timeline />
      <Taskbar />
    </div>
  );
}
